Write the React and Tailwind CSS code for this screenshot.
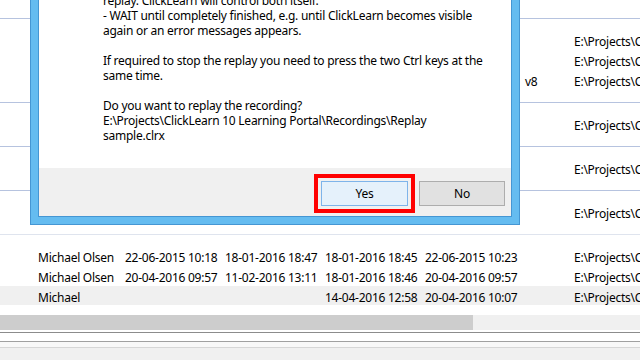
import React from "react";

const font = { fontFamily: '"Noto Sans", "Liberation Sans", sans-serif' };

function Row({ cells, className = "" }) {
  const widths = ["w-[87px]", "w-[100px]", "w-[100px]", "w-[100px]", "w-[100px]", "w-[49px]"];
  return (
    <div className={"flex h-[20px] items-center pt-[4px] pl-[38px] whitespace-nowrap " + className}>
      {widths.map((w, i) => (
        <div key={i} className={w + " shrink-0 overflow-visible"}>{cells[i] || ""}</div>
      ))}
      <div className="shrink-0">{cells[6] || ""}</div>
    </div>
  );
}

export default function App() {
  const P = "E:\\Projects\\C";
  return (
    <div className="relative w-[640px] h-[360px] overflow-hidden bg-white text-[12px] tracking-[-0.25px] text-black" style={font}>
      {/* background list */}
      <div className="flex flex-col">
        <div className="h-[19px] border-b border-[#b6c3df]" />
        <div className="h-[84px] pt-[11px] border-b border-[#b6c3df] flex flex-col">
          <Row cells={["", "", "", "", "", "", P]} />
          <Row cells={["", "", "", "", "", "", P]} />
          <Row cells={["", "", "", "", "", "v8", P]} />
        </div>
        <div className="h-[44px] pt-[11px] border-b border-[#b6c3df]">
          <Row cells={["", "", "", "", "", "", P]} />
        </div>
        <div className="h-[44px] pt-[11px] border-b border-[#b6c3df]">
          <Row cells={["", "", "", "", "", "", P]} />
        </div>
        <div className="h-[44px] pt-[11px] border-b border-[#dfe4ee]">
          <Row cells={["", "", "", "", "", "", P]} />
        </div>
        <div className="h-[11px]" />
        <Row cells={["Michael Olsen", "22-06-2015 10:18", "18-01-2016 18:47", "18-01-2016 18:45", "22-06-2015 10:23", "", P]} />
        <Row cells={["Michael Olsen", "20-04-2016 09:57", "11-02-2016 13:11", "18-01-2016 18:46", "20-04-2016 09:57", "", P]} />
        <Row className="bg-[#f0f0f0] !h-[19px]" cells={["Michael", "", "", "14-04-2016 12:58", "20-04-2016 10:07", "", P]} />
        <div className="h-[10px]" />
        <div className="h-[15px] bg-[#f0f0f0] flex">
          <div className="w-[473px] h-full bg-[#cdcdcd]" />
        </div>
        <div className="h-[2px]" />
        <div className="h-[1px] bg-[#8c8c8c]" />
        <div className="h-[8px]" />
        <div className="h-[1px] bg-[#a0a0a0]" />
        <div className="h-[5px] bg-[#f8f8f8]" />
        <div className="h-[1px] bg-[#d6d6d6]" />
        <div className="h-[12px] bg-[#f0f0f0]" />
      </div>

      {/* dialog */}
      <div className="absolute left-[30px] top-0 w-[490px] h-[225px] bg-[#65bcf0] border-x border-b border-[#4596d3] px-[7px] pb-[7px]">
        <div className="flex flex-col h-full border-x border-b border-[#4596d3]">
          <div className="h-[168px] bg-white pl-[64px] overflow-hidden">
            <div className="mt-[-7px] leading-[15px] whitespace-nowrap">
              <div>replay. ClickLearn will control both itself.</div>
              <div>- WAIT until completely finished, e.g. until ClickLearn becomes visible</div>
              <div>again or an error messages appears.</div>
              <div className="h-[15px]" />
              <div>If required to stop the replay you need to press the two Ctrl keys at the</div>
              <div>same time.</div>
              <div className="h-[15px]" />
              <div>Do you want to replay the recording?</div>
              <div>E:\Projects\ClickLearn 10 Learning Portal\Recordings\Replay</div>
              <div>sample.clrx</div>
            </div>
          </div>
          <div className="flex-1 bg-[#f0f0f0] relative">
            <div className="absolute left-[282px] top-[13px] w-[87px] h-[25px] bg-[#e5f1fb] border border-[#7eb4ea] flex items-center justify-center">Yes</div>
            <div className="absolute left-[380px] top-[13px] w-[86px] h-[25px] bg-[#e1e1e1] border border-[#adadad] flex items-center justify-center">No</div>
            <div className="absolute left-[275px] top-[6px] w-[101px] h-[39px] border-[4px] border-[#ff0000]" />
          </div>
        </div>
      </div>
    </div>
  );
}
